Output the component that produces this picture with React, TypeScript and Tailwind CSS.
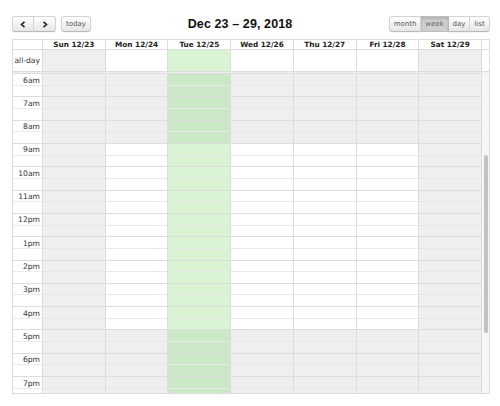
import React from "react";

type Day = { label: string; weekend: boolean; today: boolean };

const days: Day[] = [
  { label: "Sun 12/23", weekend: true, today: false },
  { label: "Mon 12/24", weekend: false, today: false },
  { label: "Tue 12/25", weekend: false, today: true },
  { label: "Wed 12/26", weekend: false, today: false },
  { label: "Thu 12/27", weekend: false, today: false },
  { label: "Fri 12/28", weekend: false, today: false },
  { label: "Sat 12/29", weekend: true, today: false },
];

const hours = ["6am", "7am", "8am", "9am", "10am", "11am", "12pm", "1pm", "2pm", "3pm", "4pm", "5pm", "6pm", "7pm"];
const slots = Array.from({ length: 28 }, (_, i) => i);

function slotBg(day: Day, i: number) {
  const hour = 6 + Math.floor(i / 2);
  const nonBusiness = day.weekend || hour < 9 || hour >= 17;
  if (day.today) return nonBusiness ? "bg-[#cce7c8]" : "bg-[#d9f3d4]";
  return nonBusiness ? "bg-[#efefef]" : "bg-white";
}

function Chevron({ dir }: { dir: "left" | "right" }) {
  return (
    <svg width="6" height="7" viewBox="0 0 6 7" className="block">
      {dir === "left" ? (
        <polyline points="4.5,0.8 1.5,3.5 4.5,6.2" fill="none" stroke="#222" strokeWidth="1.6" />
      ) : (
        <polyline points="1.5,0.8 4.5,3.5 1.5,6.2" fill="none" stroke="#222" strokeWidth="1.6" />
      )}
    </svg>
  );
}

const small = { fontFamily: '"DejaVu Sans", Verdana, sans-serif' };

const btnBase =
  "h-[16px] flex items-center justify-center text-[7px] leading-none text-[#555] border border-[#d4d4d4] border-b-[#b9b9b9] bg-gradient-to-b from-white to-[#e6e6e6] shadow-[0_1px_1px_rgba(0,0,0,0.05)]";

export default function App() {
  return (
    <div
      className="w-[500px] h-[406px] bg-white pl-[12px] pt-[16px] overflow-hidden"
      style={{ fontFamily: '"Liberation Sans", Arial, sans-serif' }}
    >
      <div className="w-[478px]">
        {/* toolbar */}
        <div className="flex items-center justify-between h-[16px]">
          <div className="flex items-center">
            <div className="flex">
              <button className={`${btnBase} w-[22px] rounded-l-[3px]`}>
                <Chevron dir="left" />
              </button>
              <button className={`${btnBase} w-[22px] rounded-r-[3px] border-l-0`}>
                <Chevron dir="right" />
              </button>
            </div>
            <button className={`${btnBase} w-[30px] ml-[5px] rounded-[3px]`} style={small}>
              today
            </button>
          </div>
          <div className="text-[12.5px] font-bold text-[#111] leading-[16px] tracking-[0.1px]">
            Dec 23 – 29, 2018
          </div>
          <div className="flex" style={small}>
            <button className={`${btnBase} w-[32px] rounded-l-[3px]`}>month</button>
            <button className="h-[16px] w-[28px] flex items-center justify-center text-[7px] leading-none text-[#666] border border-[#bdbdbd] border-l-0 bg-[#cfcfcf] shadow-[inset_0_2px_3px_rgba(0,0,0,0.15)]">
              week
            </button>
            <button className={`${btnBase} w-[21px] border-l-0`}>day</button>
            <button className={`${btnBase} w-[20px] border-l-0 rounded-r-[3px]`}>list</button>
          </div>
        </div>

        {/* calendar table */}
        <div className="mt-[7px] border border-[#dddddd] text-[#333]" style={small}>
          {/* header row */}
          <div className="flex h-[10px] border-b border-[#dddddd]">
            <div className="w-[30px] border-r border-[#dddddd]" />
            {days.map((d) => (
              <div
                key={d.label}
                className="flex-1 border-r border-[#dddddd] text-center font-bold text-[7.3px] leading-[9px] text-[#222]"
              >
                {d.label}
              </div>
            ))}
            <div className="w-[7px]" />
          </div>

          {/* all-day row */}
          <div className="flex h-[21px]">
            <div className="w-[30px] border-r border-[#dddddd] flex items-center justify-end pr-[2px] text-[7.6px] leading-none">
              all-day
            </div>
            {days.map((d) => (
              <div
                key={d.label}
                className={`flex-1 border-r border-[#dddddd] ${
                  d.today ? "bg-[#d9f3d4]" : d.weekend ? "bg-[#efefef]" : "bg-white"
                }`}
              />
            ))}
            <div className="w-[7px]" />
          </div>

          {/* divider */}
          <div className="h-[2px] border-t border-[#dddddd] bg-[#eeeeee]" />

          {/* time grid */}
          <div className="flex h-[320px] overflow-hidden">
            <div className="w-[30px] border-r border-[#dddddd] flex flex-col shrink-0">
              {slots.map((i) => (
                <div
                  key={i}
                  className={`h-[11.667px] shrink-0 border-t ${
                    i % 2 === 0 ? "border-[#dddddd]" : "border-[#ececec]"
                  } flex items-center justify-end pr-[2px] pt-[2px] text-[7.6px] leading-none`}
                >
                  {i % 2 === 0 ? hours[i / 2] : ""}
                </div>
              ))}
            </div>
            {days.map((d) => (
              <div key={d.label} className="flex-1 border-r border-[#dddddd] flex flex-col">
                {slots.map((i) => (
                  <div
                    key={i}
                    className={`h-[11.667px] shrink-0 border-t ${
                      i % 2 === 0 ? "border-[#dddddd]" : "border-[#e8e8e8]"
                    } ${slotBg(d, i)}`}
                  />
                ))}
              </div>
            ))}
            <div className="w-[7px] shrink-0 bg-[#f6f6f6] flex justify-center">
              <div className="mt-[82px] w-[4px] h-[178px] rounded-full bg-[#c2c2c2]" />
            </div>
          </div>
        </div>
      </div>
    </div>
  );
}
